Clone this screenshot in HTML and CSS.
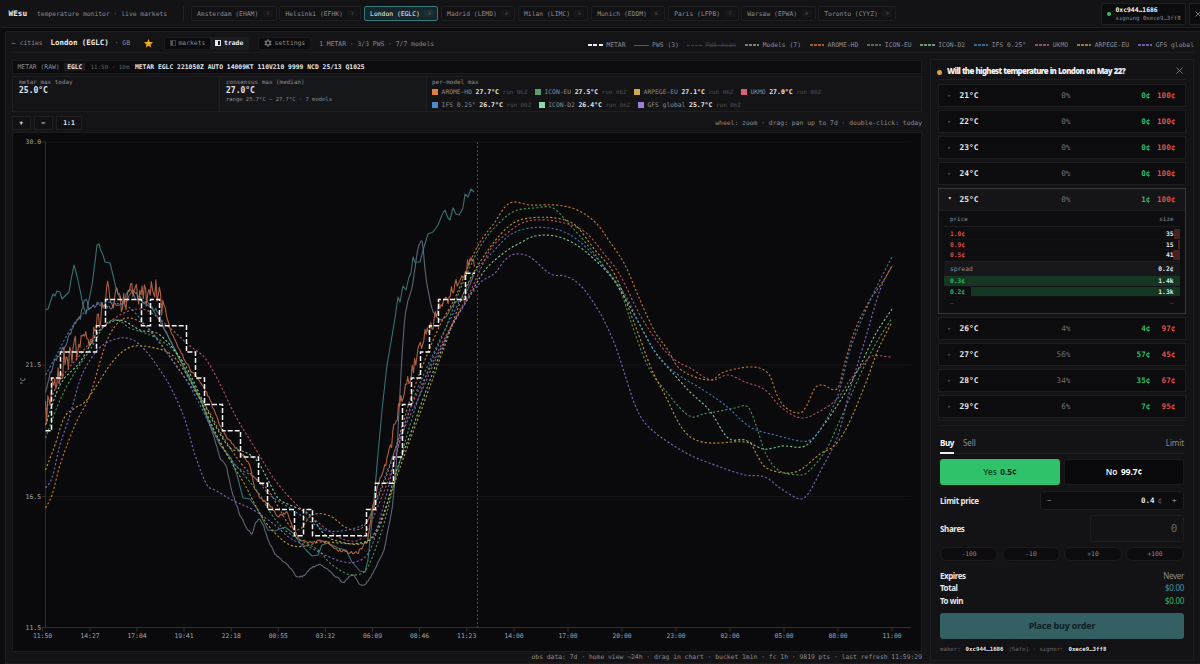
FILE: index.html
```html
<!DOCTYPE html>
<html lang="en">
<head>
<meta charset="utf-8">
<title>WEsu</title>
<link rel="stylesheet" href="styles.css">
</head>
<body>
<header class="top">
  <b class="brand">WEsu</b>
  <span class="tagline">temperature monitor · live markets</span>
  <nav class="tabs">
    <a class="tab">Amsterdam (EHAM)<i>1</i></a>
    <a class="tab">Helsinki (EFHK)<i>2</i></a>
    <a class="tab active">London (EGLC)<i>3</i></a>
    <a class="tab">Madrid (LEMD)<i>4</i></a>
    <a class="tab">Milan (LIMC)<i>5</i></a>
    <a class="tab">Munich (EDDM)<i>6</i></a>
    <a class="tab">Paris (LFPB)<i>7</i></a>
    <a class="tab">Warsaw (EPWA)<i>8</i></a>
    <a class="tab">Toronto (CYYZ)<i>9</i></a>
  </nav>
  <div class="wallet"><span class="dot"></span><div><b>0xc944…1686</b><span>signing 0xece9…3ff8</span></div></div>
  <div class="logout"><svg width="6" height="6" viewBox="0 0 6 6"><path d="M.5.5l5 5M5.500.5l-5 5"/></svg></div>
</header>

<main class="shell">
  <div class="toolbar">
    <span class="back">← cities</span>
    <b class="city">London (EGLC)</b>
    <span class="country">· GB</span>
    <svg class="star" width="9" height="9" viewBox="0 0 10 10"><path d="M5 0l1.400 3.300 3.600.3-2.700 2.400.8 3.500L5 7.600 1.900 9.500l.8-3.500L0 3.600l3.600-.3z"/></svg>
    <div class="seg">
      <span class="seg-item"><svg width="6" height="6" viewBox="0 0 6 6"><rect x=".5" y=".5" width="5" height="5" fill="none" stroke="#3c3c42"/><path d="M1 1h2v4H1z" fill="#55555c"/></svg>markets</span>
      <span class="seg-item on"><svg width="6" height="6" viewBox="0 0 6 6"><rect x=".5" y=".5" width="5" height="5" fill="#14161c" stroke="#e4e4ea"/><path d="M1 1h2v4H1z" fill="#f2f2f4"/></svg>trade</span>
    </div>
    <div class="settings"><svg width="8" height="8" viewBox="0 0 8 8"><circle cx="4" cy="4" r="2.100"/><path d="M4 .2v1.500M4 6.300v1.500M.7 2.100L2 2.850M6 5.150l1.300.75M.7 5.900L2 5.150M6 2.850l1.300-.75"/></svg>settings</div>
    <span class="counts">1 METAR · 3/3 PWS · 7/7 models</span>
    <div class="legend">
      <span><i class="sw metar"></i>METAR</span>
      <span><i class="sw pws"></i>PWS (3)</span>
      <span class="off"><i class="sw mean"></i><s>PWS-mean</s></span>
      <span><i class="sw c-white"></i>Models (7)</span>
      <span><i class="sw c-orange"></i>AROME-HD</span>
      <span><i class="sw c-green"></i>ICON-EU</span>
      <span><i class="sw c-mint"></i>ICON-D2</span>
      <span><i class="sw c-blue"></i>IFS 0.25°</span>
      <span><i class="sw c-red"></i>UKMO</span>
      <span><i class="sw c-yellow"></i>ARPEGE-EU</span>
      <span><i class="sw c-purple"></i>GFS global</span>
    </div>
  </div>

  <div class="columns">
    <section class="left">
      <div class="raw"><span>METAR (RAW)</span><b class="code">EGLC</b><span class="dim">11:50 · 10m</span><b>METAR EGLC 221050Z AUTO 14009KT 110V210 9999 NCD 25/13 Q1025</b></div>
      <div class="stats">
        <div class="stat"><small>metar max today</small><b>25.0°C</b></div>
        <div class="stat tint"><small>consensus max (median)</small><b>27.0°C</b><em>range 25.7°C – 27.7°C · 7 models</em></div>
        <div class="stat">
          <small>per-model max</small>
          <div class="models">
            <span><i class="c-orange"></i>AROME-HD <b>27.7°C</b> <u>run 06Z</u></span>
            <span><i class="c-green"></i>ICON-EU <b>27.5°C</b> <u>run 06Z</u></span>
            <span><i class="c-yellow"></i>ARPEGE-EU <b>27.1°C</b> <u>run 06Z</u></span>
            <span><i class="c-red"></i>UKMO <b>27.0°C</b> <u>run 00Z</u></span>
          </div>
          <div class="models">
            <span><i class="c-blue"></i>IFS 0.25° <b>26.7°C</b> <u>run 00Z</u></span>
            <span><i class="c-mint"></i>ICON-D2 <b>26.4°C</b> <u>run 06Z</u></span>
            <span><i class="c-purple"></i>GFS global <b>25.7°C</b> <u>run 06Z</u></span>
          </div>
        </div>
      </div>
      <div class="zoom"><b>+</b><b>−</b><b class="one">1:1</b><span>wheel: zoom · drag: pan up to 7d · double-click: today</span></div>
      <div class="chart"><svg id="chart" width="908" height="518" viewBox="13 133 908 518"></svg></div>
      <div class="foot">obs data: 7d · home view ~24h · drag in chart · bucket 1min · fc 1h · 9819 pts · last refresh 11:59:29</div>
    </section>

    <aside class="panel">
      <div class="question"><span class="qdot"></span><b>Will the highest temperature in London on May 22?</b><svg width="7" height="7" viewBox="0 0 7 7"><path d="M.5.5l6 6M6.500.5l-6 6"/></svg></div>
      <div class="rows">
        <div class="row"><i>▸</i><b>21°C</b><span>0%</span><em>0¢</em><strong>100¢</strong></div>
        <div class="row"><i>▸</i><b>22°C</b><span>0%</span><em>0¢</em><strong>100¢</strong></div>
        <div class="row"><i>▸</i><b>23°C</b><span>0%</span><em>0¢</em><strong>100¢</strong></div>
        <div class="row"><i>▸</i><b>24°C</b><span>0%</span><em>0¢</em><strong>100¢</strong></div>
        <div class="open">
          <div class="row"><i>▾</i><b>25°C</b><span>0%</span><em>1¢</em><strong>100¢</strong></div>
          <div class="book">
            <div class="book-head"><span>price</span><span>size</span></div>
            <div class="lvl ask a1"><span>1.0¢</span><b>35</b></div>
            <div class="lvl ask a2"><span>0.9¢</span><b>15</b></div>
            <div class="lvl ask a3"><span>0.5¢</span><b>41</b></div>
            <div class="spread"><span>spread</span><b>0.2¢</b></div>
            <div class="lvl bid b1"><span>0.3¢</span><b>1.4k</b></div>
            <div class="lvl bid b2"><span>0.2¢</span><b>1.3k</b></div>
            <div class="lvl none"><span>—</span><span>—</span></div>
          </div>
        </div>
        <div class="row"><i>▸</i><b>26°C</b><span>4%</span><em>4¢</em><strong>97¢</strong></div>
        <div class="row"><i>▸</i><b>27°C</b><span>56%</span><em>57¢</em><strong>45¢</strong></div>
        <div class="row"><i>▸</i><b>28°C</b><span>34%</span><em>35¢</em><strong>67¢</strong></div>
        <div class="row"><i>▸</i><b>29°C</b><span>6%</span><em>7¢</em><strong>95¢</strong></div>
      </div>
      <div class="ticket">
        <div class="sides"><b>Buy</b><span>Sell</span><span class="type">Limit</span></div>
        <div class="outcomes"><div class="yes">Yes <b>0.5¢</b></div><div class="no">No <b>99.7¢</b></div></div>
        <div class="field price"><b>Limit price</b><div class="stepper"><span>−</span><b>0.4</b><span class="unit">¢</span><span>+</span></div></div>
        <div class="field shares"><b>Shares</b><div class="amount">0</div></div>
        <div class="pills"><span>-100</span><span>-10</span><span>+10</span><span>+100</span></div>
        <div class="sum"><b>Expires</b><span>Never</span></div>
        <div class="sum"><b>Total</b><span class="teal">$0.00</span></div>
        <div class="sum"><b>To win</b><span class="win">$0.00</span></div>
        <div class="submit">Place buy order</div>
        <div class="maker">maker: <b>0xc944…1686</b> (Safe) · signer: <b>0xece9…3ff8</b></div>
      </div>
    </aside>
  </div>
</main>
<script src="chart.js"></script>
</body>
</html>
```
FILE: styles.css
```css
* { box-sizing: border-box; }
body {
  margin: 0; width: 1200px; height: 664px; overflow: hidden;
  background: #0c0c0e; color: #8b8b92;
  font: 6.360px/8px "DejaVu Sans Mono", monospace;
  display: flex; flex-direction: column;
}
i, em { font-style: normal; }
u { text-decoration: none; }
b { color: #e6e6e8; }

.top { height: 28px; flex: none; display: flex; align-items: center; background: #131315; border-bottom: 1px solid #1d1d20; padding: 0 0 0 8.500px; overflow: hidden; }
.brand { width: 28.500px; font-size: 7.700px; color: #eee; }
.tagline { width: 146px; }
.tabs { display: flex; gap: 2.700px; padding-left: 7px; border-left: 1px solid #222226; height: 15.500px; }
.tab { display: flex; align-items: center; border: 1px solid #1f1f22; border-radius: 2px; padding: 0 3px 0 5px; background: #121214; flex: none; white-space: nowrap; }
.tab i { margin-left: 4.500px; width: 10px; height: 7px; line-height: 7px; font-size: 4.500px; text-align: center; background: #17171a; color: #505056; border-radius: 1px; }
.tab.active { border-color: #39787c; background: #16272b; color: #f0f0f2; }
.tab.active i { background: #1b2e32; color: #63757a; }
.wallet { margin-left: auto; flex: none; width: 85px; height: 22px; display: flex; align-items: center; gap: 5px; padding-left: 4.500px; background: #0c0c0e; border: 1px solid #1f1f22; border-radius: 2px; font-size: 5.700px; line-height: 8px; }
.wallet div { display: flex; flex-direction: column; white-space: nowrap; }
.wallet b { color: #f0f0f0; font-size: 6.360px; }
.dot { width: 4px; height: 4px; border-radius: 50%; background: #2fc46c; }
.logout { flex: none; margin-left: 3px; width: 11px; height: 22px; border: 1px solid #1f1f22; border-right: 0; display: flex; align-items: center; padding-left: 5px; overflow: hidden; background: #0c0c0e; }
.logout svg, .question svg { flex: none; fill: none; stroke: #8a8a90; stroke-width: .8; }

.shell { margin: 3px 0 0 5px; flex: 1; min-height: 0; background: #141416; border: 1px solid #1e1e21; border-right: 0; padding: 0 6px 0 6px; }
.toolbar { height: 21px; padding-top: 2px; display: flex; align-items: center; border-bottom: 1px solid #1d1d20; white-space: nowrap; }
.back { width: 38.500px; }
.city { font-size: 7.450px; width: 64px; color: #ececec; }
.country { width: 29px; font-size: 6.500px; }
.star { fill: #f0aa28; margin-right: 11px; }
.seg, .settings { display: flex; align-items: center; height: 13px; background: #0b0b0d; border: 1px solid #1a1a1d; }
.seg-item { display: flex; align-items: center; gap: 3px; height: 11px; padding: 0 4.800px 0 5px; }
.seg-item.on { background: #1b1c22; color: #f2f2f2; font-weight: bold; }
.settings { margin-left: 8.500px; padding: 0 4.500px 0 5px; gap: 3px; }
.settings svg { fill: none; stroke: #77777e; stroke-width: 1.400; }
.counts { margin-left: 8.500px; padding-top: 1.500px; }
.legend { margin-left: auto; display: flex; gap: 8.600px; padding-top: 4.500px; font-size: 6.360px; }
.legend span { display: flex; align-items: center; gap: 3.500px; }
.legend .off { color: #3c3c41; }
.sw { width: 14.500px; height: 2px; opacity: .7; color: #777; background: repeating-linear-gradient(90deg, currentColor 0 2.600px, transparent 2.600px 4px); }
.sw.metar { opacity: 1; background: repeating-linear-gradient(90deg, #eee 0 4px, transparent 4px 5.500px); }
.sw.pws { height: 1px; background: #77777c; }
.sw.mean { height: 1px; color: #55555a; }
.c-white { color: #aaa; } .c-orange { color: #e0803c; } .c-green { color: #5a9e70; } .c-mint { color: #8ed9a5; }
.c-blue { color: #4c8acb; } .c-red { color: #d7617b; } .c-yellow { color: #d0aa4c; } .c-purple { color: #9e7dd8; }

.columns { display: flex; padding-top: 6px; gap: 8px; }
.left { width: 910px; flex: none; padding-top: 1px; }
.raw { height: 14px; display: flex; align-items: center; background: #0c0c0e; border: 1px solid #1c1c1f; padding: 0 0 1px 4.500px; white-space: pre; }
.raw .code { background: #1d1d21; margin: 0 5px 0 4.500px; padding: 0 3px; }
.raw .dim { color: #606066; width: 44.500px; font-size: 5.900px; }
.raw b { font-size: 6.360px; }
.stats { margin-top: 2px; height: 36px; display: grid; grid-template-columns: 207px 207px 1fr; border: 1px solid #1f1f23; }
.stat { padding: 1px 0 0 6px; border-right: 1px solid #1f1f23; display: flex; flex-direction: column; white-space: nowrap; }
.stat:last-child { border-right: 0; padding-left: 5px; }
.stat.tint { background: #16171b; }
.stat small { font-size: 5.950px; line-height: 8px; }
.stat > b { font-size: 8px; line-height: 9px; }
.stat em { font-size: 5.500px; line-height: 8px; }
.models { display: flex; gap: 7.500px; height: 13px; align-items: center; }
.stat small + .models { margin-top: -1px; }
.models span { display: flex; align-items: center; gap: 3.600px; font-size: 6.300px; }
.models i { width: 6px; height: 6px; background: currentColor; }
.models b { font-size: 6.500px; }
.models u { font-size: 5.900px; color: #4e4e54; }
.zoom { height: 20px; padding-top: 2px; display: flex; gap: 3.500px; align-items: center; }
.zoom b { width: 18.500px; height: 14px; border: 1px solid #1f1f22; background: #111113; text-align: center; line-height: 12px; font-size: 6.500px; }
.zoom .one { width: 26px; }
.zoom span { margin-left: auto; }
.chart { height: 520px; border: 1px solid #1c1c1f; background: #0a0a0c; }
.chart svg { display: block; }
.foot { text-align: right; padding-top: 1px; font-size: 6.370px; white-space: nowrap; }

.panel { width: 264px; flex: none; height: 602px; border: 1px solid #1f1f22; background: #131315; padding: 0 7px; }
.question { height: 20px; display: flex; align-items: center; border-bottom: 1px solid #1f1f22; padding: 2px 3px 0 0; font: 700 7.900px/10px "Noto Sans", sans-serif; }
.qdot { flex: none; width: 5px; height: 5px; border-radius: 50%; background: #d9a53c; margin: 4px 5px 0 -1px; }
.question b { letter-spacing: -.68px; word-spacing: .4px; color: #f0f0f0; white-space: nowrap; }
.question svg { margin-left: auto; }
.rows { padding-top: 4px; display: flex; flex-direction: column; gap: 3px; height: 341px; width: 247.500px; border-bottom: 1px solid #1c1c1f; }
.row { height: 23px; flex: none; display: grid; grid-template-columns: 11.500px 66px 45px 80px 1fr; padding: 0 9px; align-items: center; background: #0c0c0e; border: 1px solid #1d1d20; line-height: 9px; }
.row i { font-size: 4.500px; color: #8a8a90; }
.row b { font-size: 7.900px; }
.row span { text-align: right; color: #707077; }
.row em { text-align: right; color: #2fb866; font-weight: bold; }
.row strong { text-align: right; color: #dc4d45; }
.row span, .row em, .row strong { font-size: 7.700px; }
.open { flex: none; height: 126px; border: 1px solid #35353a; background: #0e0e10; }
.open .row { height: 22px; border: 0; border-bottom: 1px solid #1d1d20; background: #151517; }
.open .row i { font-size: 6px; color: #fff; padding-bottom: 5px; }
.book { padding: 0 5px; font-size: 6.300px; }
.book-head, .lvl, .spread { display: flex; justify-content: space-between; align-items: center; padding: 0 6px 0 6px; }
.book-head { height: 16px; margin-bottom: 2px; border-bottom: 1px solid #1d1d20; font-size: 5.900px; }
.lvl { height: 10.700px; border-bottom: 1px solid #111113; }
.ask span { color: #dc4d45; font-weight: bold; }
.bid span { color: #2fb866; font-weight: bold; }
.a1 { background: linear-gradient(90deg, transparent 97.600%, #472320 97.600%); }
.a2 { background: linear-gradient(90deg, transparent 99.100%, #472320 99.100%); }
.a3 { background: linear-gradient(90deg, transparent 97.200%, #472320 97.200%); }
.spread { height: 14.500px; background: #17171b; border-top: 1px solid #1d1d20; margin-bottom: .5px; }
.b1 { background: #143622; }
.b2 { background: linear-gradient(90deg, transparent 11.500%, #143622 11.500%); }
.lvl.none { color: #55555b; border: 0; }

.ticket { margin: 4px 1px 0 2px; border-top: 1px solid #1c1c1f; padding-top: 10px; width: 244px; font: 8px/10px "Noto Sans", sans-serif; }
.ticket b { font-weight: 700; }
.sides { height: 18px; display: flex; gap: 9px; border-bottom: 1px solid #202023; padding-top: 2px; letter-spacing: -.1px; }
.sides b { height: 16px; border-bottom: 2px solid #eee; color: #fff; letter-spacing: -.35px; }
.sides .type { margin-left: auto; }
.outcomes { display: flex; gap: 4px; margin-top: 5px; }
.outcomes div { width: 120px; height: 26px; border-radius: 3px; display: flex; gap: 3.500px; justify-content: center; align-items: center; font-weight: 600; font-size: 8.300px; }
.yes { background: #2fc26b; color: #0c4a28; }
.yes b { color: #082c18; }
.no { background: #09090b; border: 1px solid #1c1c1f; color: #eee; }
.no b { color: #fff; }
.field { display: flex; justify-content: space-between; align-items: center; letter-spacing: -.35px; }
.price { margin-top: 6px; }
.stepper { width: 144.500px; height: 19px; display: flex; align-items: center; border: 1px solid #1e1e21; border-radius: 3px; background: #0c0c0e; padding: 0 6.500px; letter-spacing: 0; font: 7.500px/9px "DejaVu Sans Mono", monospace; }
.stepper b { margin-left: auto; font-weight: bold; }
.stepper .unit { margin: 0 10px 0 3px; color: #66666c; }
.shares { margin-top: 5px; }
.amount { width: 94.500px; height: 27px; border: 1px solid #1e1e21; border-radius: 3px; font: 11px/25px "DejaVu Sans Mono", monospace; text-align: right; padding-right: 6px; color: #66666c; }
.pills { display: grid; grid-template-columns: repeat(4, 1fr); gap: 4px; margin-top: 5px; }
.pills span { height: 14px; border-radius: 7px; border: 1px solid #1c1c1f; background: #0c0c0e; font: 6.300px/12px "DejaVu Sans Mono", monospace; text-align: center; }
.pills + .sum { margin-top: 8.500px; }
.sum { height: 12.700px; line-height: 12.700px; display: flex; justify-content: space-between; letter-spacing: -.3px; }
.sum b { letter-spacing: -.45px; }
.teal { color: #3f93a5; } .win { color: #2fb866; }
.submit { margin-top: 5.500px; height: 26px; border-radius: 3px; background: #345f63; color: #0c2023; text-align: center; font: 700 9px/25px "Noto Sans", sans-serif; letter-spacing: -.2px; }
.maker { margin-top: 6px; font: 5.720px/9px "DejaVu Sans Mono", monospace; color: #68686e; white-space: nowrap; }
.maker b { background: #0b0b0d; padding: 0 1.500px; font-weight: bold; }

#chart text { font: 6.400px "DejaVu Sans Mono", monospace; fill: #a2a2a8; }
#chart .axis { stroke: #2f2f33; fill: none; }
#chart .grid { stroke: #141417; }
#chart .now { stroke: #5c5c61; stroke-dasharray: 2 2; stroke-width: .8; }
#chart .station { fill: none; stroke-width: 1.100; opacity: .85; stroke-linejoin: round; }
#chart .model { fill: none; stroke-width: 1.150; stroke-dasharray: 2.200 2; opacity: .9; }
#chart .metar { fill: none; stroke: #f4f4f4; stroke-width: 1.500; stroke-dasharray: 5 2; }
```
FILE: chart.js
```js
(function () {
  var svg = document.getElementById('chart');
  var NS = 'http://www.w3.org/2000/svg';
  function add(tag, attrs, text) {
    var el = document.createElementNS(NS, tag);
    Object.keys(attrs).forEach(function (k) { el.setAttribute(k, attrs[k]); });
    if (text) el.textContent = text;
    svg.appendChild(el);
  }
  function pts(s) {
    return s.split(' ').map(function (p) { return p.split(',').map(Number); });
  }
  function line(p) {
    return 'M' + p.map(function (a) { return a[0].toFixed(1) + ' ' + a[1].toFixed(1); }).join('L');
  }
  // Catmull-Rom spline converted to cubic segments
  function smooth(p) {
    var d = 'M' + p[0].join(' ');
    for (var i = 0; i < p.length - 1; i++) {
      var a = p[i - 1] || p[i], b = p[i], c = p[i + 1], e = p[i + 2] || c;
      var w = c[0] - b[0];
      var s1 = c[0] > a[0] ? (c[1] - a[1]) / (c[0] - a[0]) : 0;
      var s2 = e[0] > b[0] ? (e[1] - b[1]) / (e[0] - b[0]) : 0;
      d += 'C' + [b[0] + w / 3, b[1] + s1 * w / 3, c[0] - w / 3, c[1] - s2 * w / 3, c[0], c[1]].map(function (v) { return v.toFixed(1); }).join(' ');
    }
    return d;
  }
  // Adds sensor jitter between base points; amp(x) gives the amplitude
  function jitter(p, amp, seed, step) {
    var out = [], k = 0;
    for (var x = p[0][0]; x <= p[p.length - 1][0]; x += step) {
      while (k < p.length - 2 && p[k + 1][0] < x) k++;
      var t = (x - p[k][0]) / (p[k + 1][0] - p[k][0]);
      seed = (seed * 16807) % 2147483647;
      out.push([x, p[k][1] + t * (p[k + 1][1] - p[k][1]) + (seed / 2147483647 - 0.5) * 2 * amp(x)]);
    }
    return out;
  }

  [[142, '30.0'], [365, '21.5'], [496.5, '16.5'], [627.5, '11.5']].forEach(function (g) {
    add('path', { 'class': 'grid', d: 'M46 ' + g[0] + 'H911' });
    add('path', { 'class': 'axis', d: 'M42 ' + g[0] + 'h4' });
    add('text', { x: 41, y: g[0] + 2.3, 'text-anchor': 'end' }, g[1]);
  });
  add('path', { 'class': 'axis', d: 'M45.5 142V627.5H911' });
  [[42.5, '11:50'], [90, '14:27'], [137, '17:04'], [184, '19:41'], [231.3, '22:18'], [278.3, '00:55'], [325.4, '03:32'], [372.5, '06:09'], [419.5, '08:46'], [466.7, '11:23'], [514, '14:00'], [568, '17:00'], [622, '20:00'], [676, '23:00'], [730, '02:00'], [784, '05:00'], [838, '08:00'], [892, '11:00']].forEach(function (t) {
    add('path', { 'class': 'axis', d: 'M' + t[0] + ' 627.5v4' });
    add('text', { x: t[0], y: 637.5, 'text-anchor': 'middle' }, t[1]);
  });
  add('text', { transform: 'translate(25 385) rotate(-90)' }, '°C');
  add('path', { 'class': 'now', d: 'M477.5 142V627' });

  var models = [
    ['#d07b3a', '45.5,508 52,495 60,465 75,425 90,395 103,352 110,334 120,321 130,318 145,325 158,340 172,360 190,385 205,405 222,435 240,462 255,478 268,490 280,510 290,526 300,529 312,515 330,516 345,527 355,530 365,525 375,505 385,480 395,450 410,400 425,360 440,325 455,298 470,262 480,242 495,222 505,207 513,202 530,205 555,205 575,209 595,222 610,242 625,265 640,300 655,332 668,350 677,366 690,375 711,380 722,373 735,369 750,367 762,369 770,376 777,395 785,407 800,413 807,405 815,388 822,385 838,388 845,362 855,330 870,300 882,283 892,266'],
    ['#4b9a60', '45.5,438 60,400 75,372 90,350 105,325 117,320 130,328 145,333 160,340 175,352 185,368 200,398 215,432 230,458 245,476 260,495 272,515 285,530 300,540 318,550 330,563 345,573 355,575 366,570 375,550 385,520 395,480 410,425 430,365 445,330 460,290 480,247 500,222 515,211 535,208 553,208 570,225 590,248 605,268 620,290 632,325 645,360 655,378 665,390 680,408 692,417 703,414 720,411 735,408 748,407 756,425 765,452 778,470 800,475 808,472 826,450 840,420 860,375 875,345 892,318'],
    ['#86cf9b', '45.5,425 60,385 80,362 100,330 120,320 140,330 160,335 185,365 200,395 215,425 230,448 245,452 258,462 268,480 278,498 290,505 310,515 325,535 345,543 360,543 372,537 385,510 395,475 410,435 430,380 450,330 470,295 485,270 505,252 520,243 535,236 555,236 575,244 595,260 615,282 640,325 655,352 672,372 690,392 710,411 728,438 745,440 763,449 783,446 805,446 820,430 842,398 860,366 875,335 892,309'],
    ['#3f80b8', '45.5,375 55,358 70,330 85,312 100,303 115,303 130,308 145,325 165,350 185,378 200,405 215,435 235,465 255,478 270,495 290,508 305,518 325,530 340,531 355,528 368,520 380,490 395,450 415,395 435,350 455,310 475,272 490,255 510,235 530,228 555,229 575,238 600,262 625,295 645,335 660,358 677,374 700,388 725,405 750,427 775,435 800,441 810,440 820,430 838,395 850,350 865,312 880,280 892,257'],
    ['#c0556a', '45.5,410 60,380 80,355 100,330 120,315 137,309 150,312 170,328 190,346 205,358 218,380 235,415 255,448 275,480 300,508 315,520 335,535 350,541 362,538 372,520 390,475 410,410 430,368 450,328 470,292 490,250 505,235 520,224 535,220 560,222 585,232 605,255 620,275 640,315 660,345 675,360 690,368 711,380 728,375 745,382 765,390 782,408 802,418 822,410 838,398 850,380 865,362 872,356 892,357'],
    ['#c49a35', '45.5,470 55,445 64,418 75,408 85,402 95,388 110,365 122,352 135,346 155,348 172,355 185,372 200,400 215,432 230,460 245,485 258,510 272,530 290,545 305,546 320,542 340,543 365,543 378,530 392,490 410,440 425,400 445,345 465,290 480,262 500,235 515,222 530,218 555,218 575,225 595,250 615,275 635,325 652,370 665,395 680,425 692,438 710,443 750,443 757,455 765,467 785,473 800,470 820,454 835,445 848,425 865,385 878,350 892,322'],
    ['#8568c2', '45.5,488 52,478 60,445 70,415 80,380 90,360 103,345 120,338 133,340 145,350 160,370 172,390 185,420 195,455 207,485 215,490 232,500 255,511 275,525 290,538 305,545 325,555 340,561 355,562 370,550 385,500 400,440 420,395 440,350 460,312 480,283 495,273 505,260 515,254 530,257 545,270 553,275 565,276 580,285 600,313 615,345 625,375 635,405 645,423 665,440 690,455 712,464 745,475 765,477 780,488 800,499 808,494 820,472 838,435 850,390 865,340 880,290 892,266']
  ];

  var grey = pts('45.5,395 50,375 55,360 60,352 66,345 70,334 74,325 80,318 84,302 86,297 89,310 93,308 98,304 105,306 110,308 118,304 124,302 130,294 134,290 140,297 144,304 150,305 155,310 158,312 165,330 180,360 200,398 215,440 220,458 226,465 232,492 240,515 248,530 252,535 255,524 259,519 263,524 268,540 275,554 284,562 292,570 297,577 304,576 311,568 320,564 326,568 334,575 344,583 350,576 354,575 360,585 365,585 372,575 384,550 392,510 396,470 399,410 402,355 405,315 408,300 412,289 415,268 418,247 421,241 423,243 424,262 427,285 430,300 433,312 437,317 440,320 445,318 450,310 455,302 463,300 468,288 474,275');
  var teal = pts('45.5,310 48,309 50,303 53,294 55,296 57,291 60,292 62,299 65,296 69,292 71,280 74,265 77,276 80,290 83,305 86,314 89,300 92,285 95,262 97,245 99,244 101,251 103,255 105,262 110,263 113,275 116,288 119,296 121,300 124,304 126,294 130,289 133,293 136,300 140,298 144,304 147,301 150,305 153,310 158,318 170,340 180,360 190,380 200,398 210,424 220,445 231,458 237,475 243,498 250,499 258,510 268,530 275,531 285,527 293,533 300,543 306,550 312,556 318,555 322,545 328,543 338,548 346,550 352,562 360,571 365,572 368,560 371,530 374,500 377,465 382,410 387,365 391,342 395,318 398,297 400,302 403,286 406,290 409,277 411,273 413,257 415,262 420,262 424,247 428,234 433,232 438,225 442,215 445,210 448,218 450,220 453,208 456,214 459,215 463,208 465,194 468,197 471,189 474,192');
  var orange = pts('45.5,415 52,380 58,372 65,360 72,350 80,345 86,335 92,330 98,318 104,305 110,290 116,300 125,295 135,292 142,298 150,298 155,292 160,300 165,308 170,330 180,350 190,370 203,385 210,400 222,430 232,444 240,452 248,462 251,470 255,490 262,500 270,505 278,517 287,512 293,528 300,540 308,543 320,541 328,543 336,549 346,552 358,553 364,545 368,540 372,510 378,485 386,462 393,436 399,405 405,389 412,372 420,348 425,336 432,325 440,305 447,303 453,288 456,280 462,280 468,264 475,264');

  add('path', { 'class': 'station', stroke: '#6c7488', d: line(jitter(grey, function (x) { return x < 160 ? 2.5 : 0.8; }, 77, 1.2)) });
  add('path', { 'class': 'station', stroke: '#418384', d: line(teal) });
  add('path', { 'class': 'station', stroke: '#c8704e', d: line(jitter(orange, function (x) { return x < 165 ? 15 : x < 385 ? 1.5 : 7; }, 4242, 1.15)) });
  models.forEach(function (m) {
    add('path', { 'class': 'model', stroke: m[0], d: smooth(pts(m[1])) });
  });
  add('path', { 'class': 'metar', d: 'M45.5 430.7H51.5V378H60.5V352H96.5V325.7H105.5V299.5H141.5V325.7H150.5V299.5H159.5V325.7H186.5V352H195.5V378H204.5V404.4H222.5V430.7H240.5V456.900H258.5V483.200H267.5V509.400H294.5V535.700H303.5V509.400H312.5V535.700H366.5V509.400H375.5V483.200H393.5V456.900H402.5V404.400H411.5V378H420.5V352H429.5V325.700H438.5V299.500H465.5V273.200H475' });
})();
```
